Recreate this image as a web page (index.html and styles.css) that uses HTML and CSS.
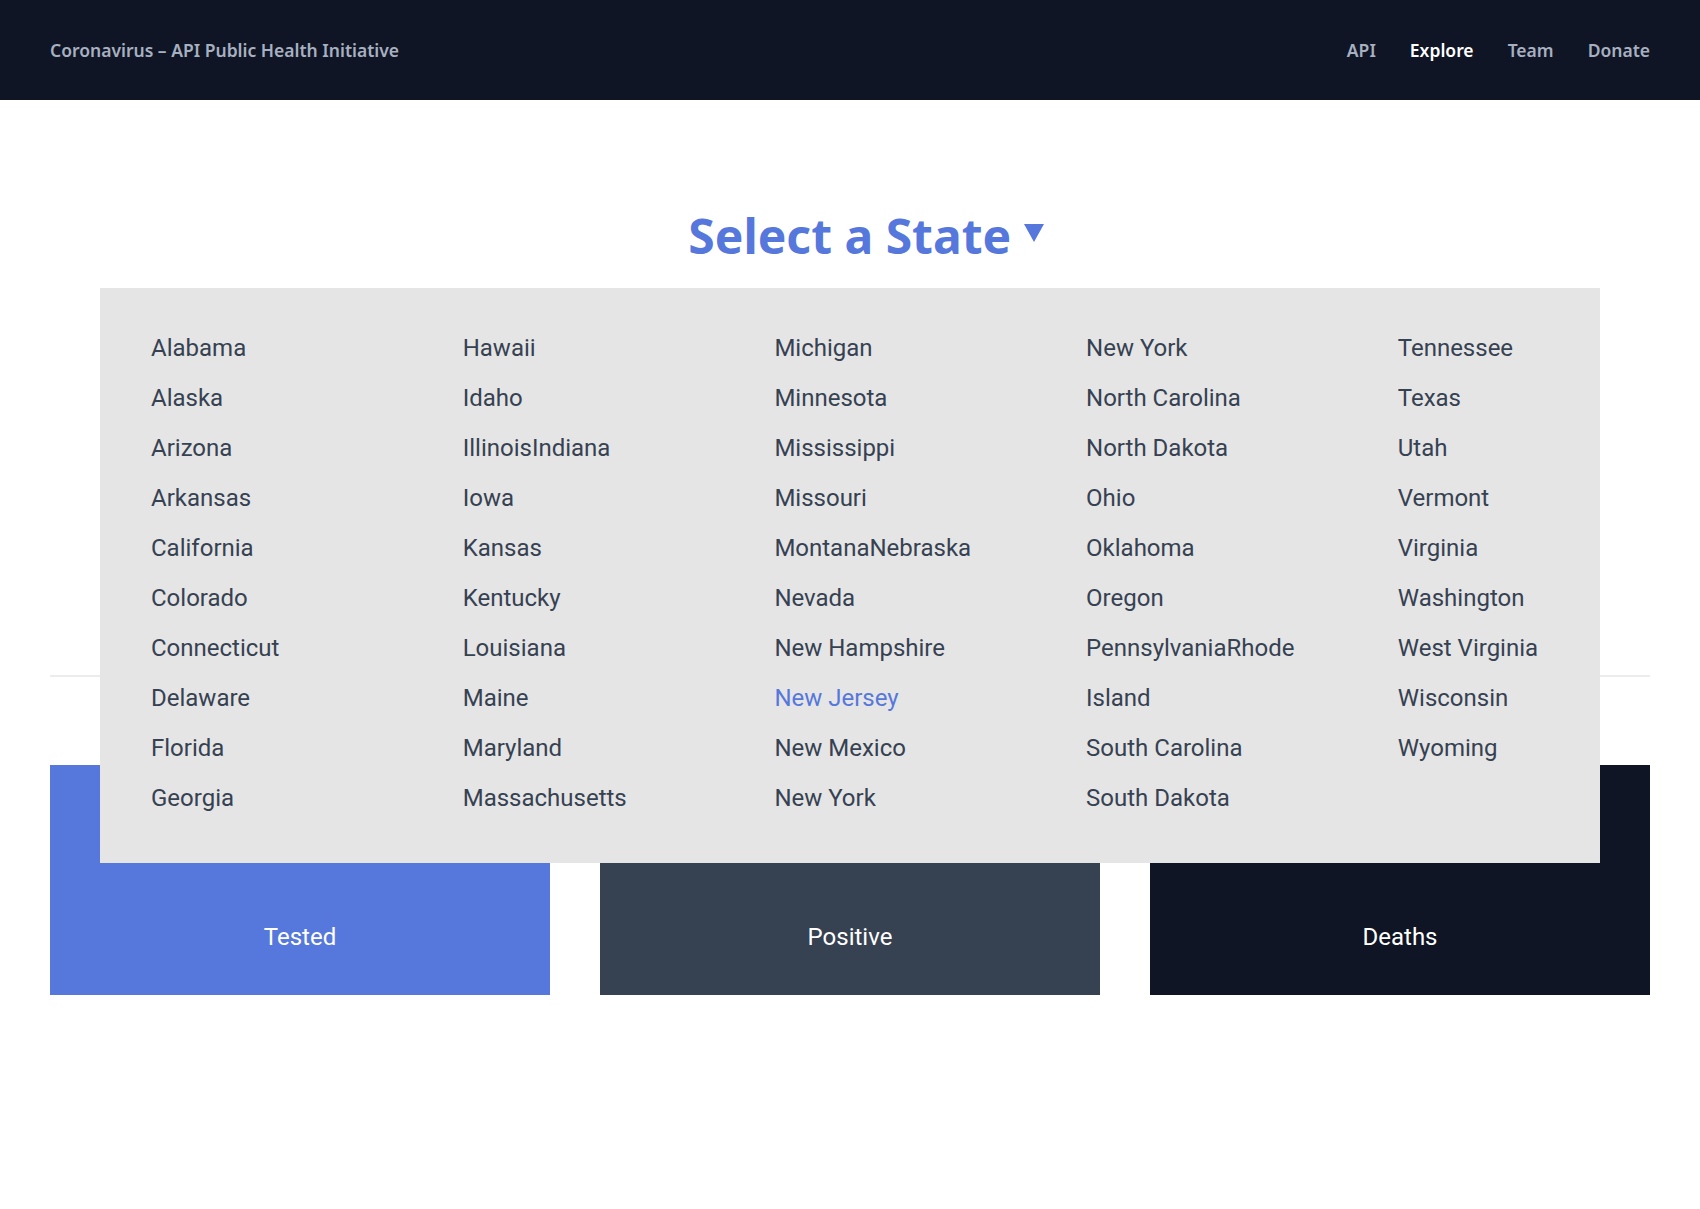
FILE: index.html
```html
<!DOCTYPE html>
<html lang="en">
<head>
<meta charset="utf-8">
<title>Explore – Coronavirus API</title>
<link rel="stylesheet" href="styles.css">
</head>
<body>
<header class="topbar">
  <a class="brand" href="#">Coronavirus – API Public Health Initiative</a>
  <nav class="nav">
    <a href="#" class="nav-link">API</a>
    <a href="#" class="nav-link active">Explore</a>
    <a href="#" class="nav-link">Team</a>
    <a href="#" class="nav-link">Donate</a>
  </nav>
</header>
<main class="main">
  <section class="picker">
    <h1 class="picker-title">Select a State <span class="caret"></span></h1>
    <div class="dropdown">
      <ul class="state-grid">
        <li>Alabama</li><li>Alaska</li><li>Arizona</li><li>Arkansas</li><li>California</li><li>Colorado</li><li>Connecticut</li><li>Delaware</li><li>Florida</li><li>Georgia</li>
        <li>Hawaii</li><li>Idaho</li><li>IllinoisIndiana</li><li>Iowa</li><li>Kansas</li><li>Kentucky</li><li>Louisiana</li><li>Maine</li><li>Maryland</li><li>Massachusetts</li>
        <li>Michigan</li><li>Minnesota</li><li>Mississippi</li><li>Missouri</li><li>MontanaNebraska</li><li>Nevada</li><li>New Hampshire</li><li class="selected">New Jersey</li><li>New Mexico</li><li>New York</li>
        <li>New York</li><li>North Carolina</li><li>North Dakota</li><li>Ohio</li><li>Oklahoma</li><li>Oregon</li><li>PennsylvaniaRhode</li><li>Island</li><li>South Carolina</li><li>South Dakota</li>
        <li>Tennessee</li><li>Texas</li><li>Utah</li><li>Vermont</li><li>Virginia</li><li>Washington</li><li>West Virginia</li><li>Wisconsin</li><li>Wyoming</li>
      </ul>
    </div>
  </section>
  <hr class="divider">
  <section class="stats">
    <div class="stat stat-tested"><span class="stat-label">Tested</span></div>
    <div class="stat stat-positive"><span class="stat-label">Positive</span></div>
    <div class="stat stat-deaths"><span class="stat-label">Deaths</span></div>
  </section>
</main>
</body>
</html>
```
FILE: styles.css
```css
* { box-sizing: border-box; }
html, body { margin: 0; padding: 0; }
body {
  font-family: Roboto, "Liberation Sans", sans-serif;
  background: #ffffff;
  color: #364152;
}
a { text-decoration: none; }

.topbar {
  height: 100px;
  background: #0f1524;
  display: flex;
  align-items: center;
  justify-content: space-between;
  padding: 0 50px;
  font-family: "Noto Sans", Roboto, sans-serif;
}
.brand {
  color: #a7b0c0;
  font-size: 17.5px;
  font-weight: 600;
}
.nav { display: flex; gap: 34px; }
.nav-link {
  color: #a7b0c0;
  font-size: 17.5px;
  font-weight: 600;
}
.nav-link.active { color: #ffffff; }

.main { padding: 0 50px; }

.picker {
  position: relative;
  padding-top: 206px;
  height: 675px;
  margin-top: -100px;
}
.picker-title {
  margin: 0;
  padding-left: 32px;
  text-align: center;
  font-family: "Noto Sans", Roboto, sans-serif;
  font-size: 48px;
  line-height: 60px;
  font-weight: 700;
  color: #5677db;
}
.caret {
  display: inline-block;
  width: 0; height: 0;
  border-left: 10px solid transparent;
  border-right: 10px solid transparent;
  border-top: 18px solid #5677db;
  vertical-align: 12px;
  margin-left: 0;
}
.dropdown {
  position: absolute;
  top: 288px;
  left: 50px;
  right: 50px;
  height: 575px;
  background: #e5e5e5;
  padding: 35px 0 40px 51px;
  z-index: 10;
}
.state-grid {
  list-style: none;
  margin: 0;
  padding: 0;
  display: grid;
  grid-auto-flow: column;
  grid-template-rows: repeat(10, 50px);
  grid-template-columns: repeat(5, 311.7px);
}
.state-grid li {
  font-size: 24px;
  line-height: 50px;
  color: #364152;
  white-space: nowrap;
}
.state-grid li.selected { color: #5677db; }

.divider {
  margin: 0;
  border: 0;
  border-top: 2px solid #ececec;
}

.stats {
  display: flex;
  gap: 50px;
  margin-top: 88px;
}
.stat {
  flex: 1;
  height: 230px;
  display: flex;
  align-items: flex-end;
  justify-content: center;
  padding-bottom: 42px;
}
.stat-label {
  color: #ffffff;
  font-size: 24px;
  line-height: 32px;
}
.stat-tested { background: #5677db; }
.stat-positive { background: #364152; }
.stat-deaths { background: #0f1524; }
```
